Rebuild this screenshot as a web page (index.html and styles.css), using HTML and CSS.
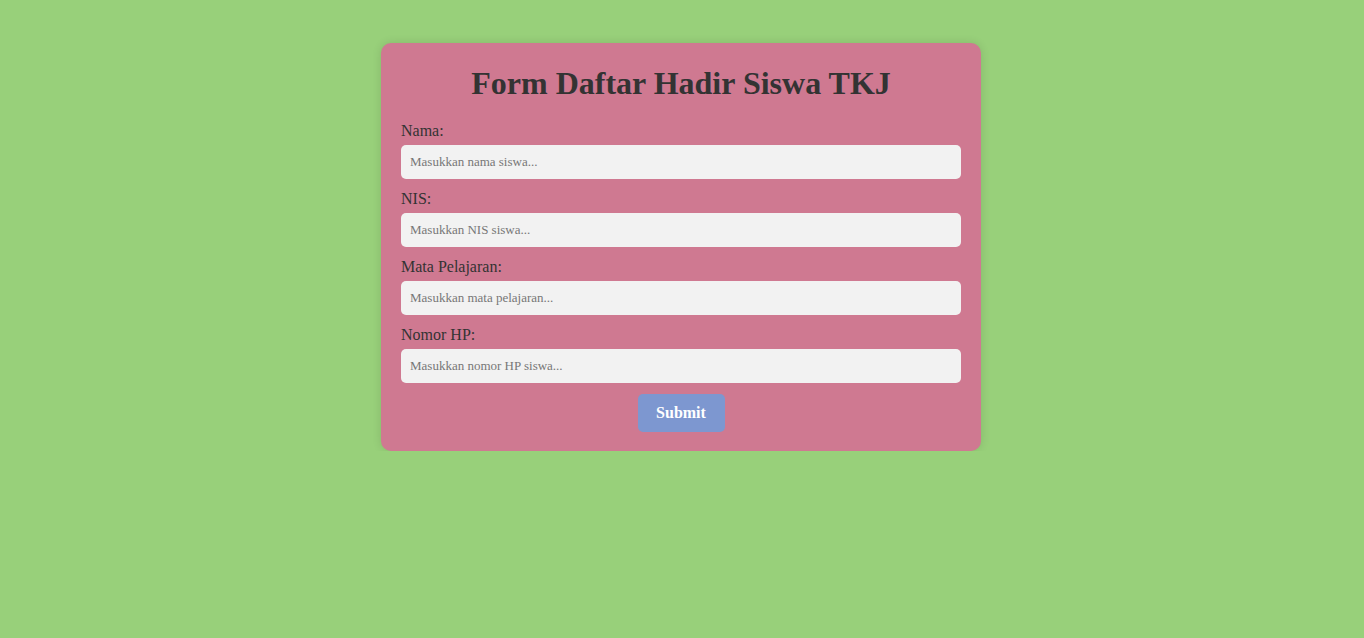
FILE: index.html
```html
<!DOCTYPE html>
<html lang="id">
<head>
<meta charset="utf-8">
<title>Form Daftar Hadir Siswa TKJ</title>
<link rel="stylesheet" href="styles.css">
</head>
<body>
<div class="page">
  <div class="card">
    <h2 class="title">Form Daftar Hadir Siswa TKJ</h2>
    <form class="form">
      <div class="field">
        <label class="label" for="nama">Nama:</label>
        <input class="input" id="nama" type="text" placeholder="Masukkan nama siswa...">
      </div>
      <div class="field">
        <label class="label" for="nis">NIS:</label>
        <input class="input" id="nis" type="text" placeholder="Masukkan NIS siswa...">
      </div>
      <div class="field">
        <label class="label" for="mapel">Mata Pelajaran:</label>
        <input class="input" id="mapel" type="text" placeholder="Masukkan mata pelajaran...">
      </div>
      <div class="field">
        <label class="label" for="hp">Nomor HP:</label>
        <input class="input" id="hp" type="text" placeholder="Masukkan nomor HP siswa...">
      </div>
      <div class="actions">
        <button class="submit" type="button">Submit</button>
      </div>
    </form>
  </div>
</div>
</body>
</html>
```
FILE: styles.css
```css
html, body {
  margin: 0;
  padding: 0;
  background: #98d07a;
  min-height: 100%;
}
body {
  font-family: "Liberation Serif", "DejaVu Serif", serif;
  color: #333;
}
.page {
  display: flex;
  justify-content: center;
  padding-top: 43px;
  padding-right: 2px;
}
.card {
  width: 600px;
  box-sizing: border-box;
  background: #cf7991;
  border-radius: 10px;
  padding: 20px 20px 19px;
  box-shadow: 0 0 10px rgba(0, 0, 0, 0.12);
}
.title {
  margin: 0 0 19px;
  font-size: 32px;
  line-height: 40px;
  text-align: center;
  font-weight: bold;
  color: #333;
}
.form {
  display: flex;
  flex-direction: column;
  gap: 11px;
}
.field {
  display: flex;
  flex-direction: column;
}
.label {
  font-size: 16px;
  line-height: 18px;
  margin-bottom: 5px;
  color: #333;
}
.input {
  height: 34px;
  box-sizing: border-box;
  border: none;
  border-radius: 5px;
  background: #f2f2f2;
  padding: 0 9px;
  font-family: "Liberation Serif", "DejaVu Serif", serif;
  font-size: 13px;
  color: #333;
  outline: none;
}
.input::placeholder {
  color: #777;
}
.actions {
  display: flex;
  justify-content: center;
}
.submit {
  width: 87px;
  height: 38px;
  border: none;
  border-radius: 5px;
  background: #7d97d0;
  color: #fff;
  font-family: "Liberation Serif", "DejaVu Serif", serif;
  font-weight: bold;
  font-size: 16px;
  cursor: pointer;
}
```
